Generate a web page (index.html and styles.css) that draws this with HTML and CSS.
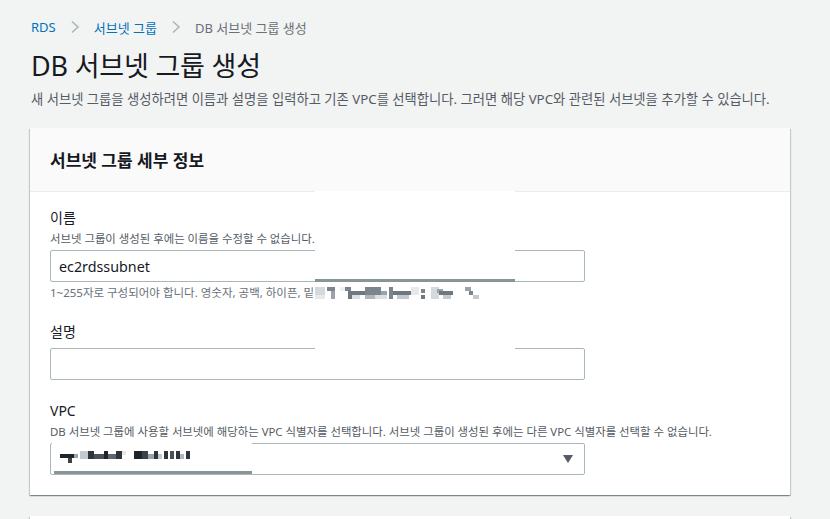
FILE: index.html
```html
<!DOCTYPE html>
<html lang="ko">
<head>
    <meta charset="UTF-8">
    <title>DB 서브넷 그룹 생성</title>
    <link rel="stylesheet" href="styles.css">
</head>
<body>
    <div class="page">
        <!-- Breadcrumbs -->
        <div class="crumbs">
            <a class="crumb-link">RDS</a>
            <svg class="chev" width="10" height="14" viewBox="0 0 10 14"><path d="M2 1.5 L8 7 L2 12.5" fill="none" stroke="#aab7b8" stroke-width="1.6"/></svg>
            <a class="crumb-link">서브넷 그룹</a>
            <svg class="chev" width="10" height="14" viewBox="0 0 10 14"><path d="M2 1.5 L8 7 L2 12.5" fill="none" stroke="#aab7b8" stroke-width="1.6"/></svg>
            <span class="crumb-current">DB 서브넷 그룹 생성</span>
        </div>

        <h1 class="title">DB 서브넷 그룹 생성</h1>
        <p class="lead">새 서브넷 그룹을 생성하려면 이름과 설명을 입력하고 기존 VPC를 선택합니다. 그러면 해당 VPC와 관련된 서브넷을 추가할 수 있습니다.</p>

        <!-- Details card -->
        <div class="card">
            <div class="card-head">서브넷 그룹 세부 정보</div>
            <div class="card-body">
                <div class="field">
                    <div class="label">이름</div>
                    <div class="hint">서브넷 그룹이 생성된 후에는 이름을 수정할 수 없습니다.</div>
                    <div class="input">ec2rdssubnet</div>
                    <div class="constraint">1~255자로 구성되어야 합니다. 영숫자, 공백, 하이픈, 밑</div>
                </div>
                <div class="field">
                    <div class="label label-tight">설명</div>
                    <div class="input"></div>
                </div>
                <div class="field">
                    <div class="label">VPC</div>
                    <div class="hint">DB 서브넷 그룹에 사용할 서브넷에 해당하는 VPC 식별자를 선택합니다. 서브넷 그룹이 생성된 후에는 다른 VPC 식별자를 선택할 수 없습니다.</div>
                    <div class="input select">
                        <span></span>
                        <svg width="10" height="8" viewBox="0 0 10 8"><path d="M0 0 H10 L5 8 Z" fill="#545b64"/></svg>
                    </div>
                </div>
            </div>

            <!-- redacted areas from the original capture -->
            <div class="redact redact-name"></div>
            <div class="redact-bar redact-name-bar"></div>
            <svg class="pix pix-name" width="165" height="12" viewBox="0 0 165 12">
                <rect x="0" y="0" width="10" height="8" fill="#d5d9dc"/>
                <rect x="0" y="8" width="10" height="4" fill="#e6e8ea"/>
                <rect x="12" y="0" width="8" height="4" fill="#7c858e"/>
                <rect x="16" y="4" width="4" height="8" fill="#9aa2aa"/>
                <rect x="25" y="0" width="6" height="4" fill="#f0f1f2"/>
                <rect x="30" y="0" width="6" height="4" fill="#7c858e"/>
                <rect x="33" y="4" width="18" height="4" fill="#6f7880"/>
                <rect x="33" y="8" width="4" height="4" fill="#6f7880"/>
                <rect x="37" y="8" width="8" height="4" fill="#dde0e3"/>
                <rect x="50" y="0" width="16" height="8" fill="#7c858e"/>
                <rect x="50" y="8" width="10" height="4" fill="#b0b6bc"/>
                <rect x="60" y="8" width="12" height="4" fill="#dde0e3"/>
                <rect x="66" y="4" width="6" height="4" fill="#9aa2aa"/>
                <rect x="74" y="0" width="4" height="12" fill="#7c858e"/>
                <rect x="78" y="4" width="18" height="4" fill="#6f7880"/>
                <rect x="82" y="8" width="12" height="4" fill="#c4c9ce"/>
                <rect x="96" y="0" width="8" height="8" fill="#e6e8ea"/>
                <rect x="106" y="2" width="4" height="4" fill="#7c858e"/>
                <rect x="106" y="8" width="4" height="4" fill="#6f7880"/>
                <rect x="116" y="0" width="8" height="12" fill="#d5d9dc"/>
                <rect x="122" y="2" width="6" height="4" fill="#9aa2aa"/>
                <rect x="124" y="4" width="14" height="4" fill="#6f7880"/>
                <rect x="128" y="8" width="8" height="4" fill="#c4c9ce"/>
                <rect x="150" y="0" width="6" height="4" fill="#9aa2aa"/>
                <rect x="154" y="4" width="4" height="4" fill="#7c858e"/>
                <rect x="158" y="8" width="6" height="4" fill="#c4c9ce"/>
            </svg>

            <div class="redact redact-vpc"></div>
            <div class="redact-bar redact-vpc-bar"></div>
            <svg class="pix pix-vpc" width="160" height="13" viewBox="0 0 160 13">
                <rect x="0" y="3" width="14" height="4" fill="#1f242b"/>
                <rect x="8" y="7" width="4" height="5" fill="#3c434b"/>
                <rect x="14" y="3" width="4" height="4" fill="#9aa2aa"/>
                <rect x="20" y="0" width="8" height="8" fill="#c4c9ce"/>
                <rect x="28" y="0" width="6" height="8" fill="#2f353c"/>
                <rect x="34" y="3" width="10" height="5" fill="#4a5159"/>
                <rect x="44" y="0" width="4" height="8" fill="#1f242b"/>
                <rect x="48" y="3" width="8" height="5" fill="#5e666e"/>
                <rect x="56" y="0" width="6" height="8" fill="#2f353c"/>
                <rect x="62" y="0" width="4" height="4" fill="#e6e8ea"/>
                <rect x="74" y="0" width="8" height="8" fill="#1f242b"/>
                <rect x="82" y="0" width="6" height="8" fill="#3c434b"/>
                <rect x="88" y="3" width="6" height="5" fill="#9aa2aa"/>
                <rect x="94" y="0" width="4" height="8" fill="#2f353c"/>
                <rect x="98" y="3" width="4" height="5" fill="#c4c9ce"/>
                <rect x="104" y="0" width="4" height="8" fill="#2f353c"/>
                <rect x="110" y="0" width="4" height="8" fill="#4a5159"/>
                <rect x="116" y="0" width="4" height="8" fill="#2f353c"/>
                <rect x="120" y="3" width="4" height="5" fill="#b0b6bc"/>
                <rect x="126" y="0" width="4" height="8" fill="#2f353c"/>
            </svg>
        </div>

        <div class="card card-next"></div>
    </div>
</body>
</html>
```

FILE: styles.css
```css
* {
    margin: 0;
    padding: 0;
    box-sizing: border-box;
}

html, body {
    width: 100%;
    height: 100%;
    overflow: hidden;
}

body {
    background: #f2f3f3;
    color: #16191f;
    font-family: "Noto Sans", "Noto Sans CJK KR", sans-serif;
}

.page {
    padding: 18px 40px 0 30px;
}

/* Breadcrumbs */
.crumbs {
    display: flex;
    align-items: center;
    gap: 12px;
    height: 18px;
    padding-left: 1px;
    font-size: 13px;
}

.crumb-link {
    color: #0073bb;
}

.crumb-current {
    color: #687078;
}

.chev {
    margin: 0 2px;
}

/* Heading */
.title {
    margin-top: 12px;
    padding-left: 1px;
    font-size: 27px;
    font-weight: 400;
    line-height: 36px;
    letter-spacing: -0.2px;
}

.lead {
    margin-top: 5px;
    padding-left: 1px;
    font-size: 13.3px;
    line-height: 20px;
    color: #545b64;
}

/* Card */
.card {
    position: relative;
    width: 760px;
    margin-top: 19px;
    background: #fff;
    box-shadow: 0 1px 1px 0 rgba(0, 28, 36, 0.3), 1px 1px 1px 0 rgba(0, 28, 36, 0.15), -1px 1px 1px 0 rgba(0, 28, 36, 0.15);
}

.card-head {
    height: 64px;
    padding: 0 20px;
    display: flex;
    align-items: center;
    background: #fafafa;
    border-bottom: 1px solid #eaeded;
    font-size: 17px;
    font-weight: 700;
}

.card-body {
    padding: 15px 20px 20px;
    display: flex;
    flex-direction: column;
    gap: 20px;
}

.label {
    font-size: 14px;
    line-height: 22px;
}

.label-tight {
    margin-bottom: 5px;
}

.hint {
    margin-top: 2px;
    font-size: 11.4px;
    line-height: 16px;
    color: #545b64;
    white-space: nowrap;
}

.input {
    width: 535px;
    height: 32px;
    margin-top: 3px;
    padding: 0 10px 0 8px;
    display: flex;
    align-items: center;
    border: 1px solid #aab7b8;
    border-radius: 2px;
    font-size: 14.3px;
}

.select {
    justify-content: space-between;
    padding-right: 11px;
}

.constraint {
    margin-top: 3px;
    font-size: 11.5px;
    line-height: 16px;
    color: #687078;
}

.card-next {
    height: 40px;
    margin-top: 21px;
}

/* Redacted bits of the screenshot */
.redact {
    position: absolute;
    background: #fff;
}

.redact-bar {
    position: absolute;
    height: 3px;
    background: #879596;
}

.pix {
    position: absolute;
}

.redact-name { left: 285px; top: 63px; width: 200px; height: 160px; }
.redact-name-bar { left: 285px; top: 151px; width: 200px; }
.pix-name { left: 285px; top: 159px; }

.redact-vpc { left: 22px; top: 313px; width: 200px; height: 30px; }
.redact-vpc-bar { left: 24px; top: 343px; width: 198px; }
.pix-vpc { left: 30px; top: 323px; }
```
